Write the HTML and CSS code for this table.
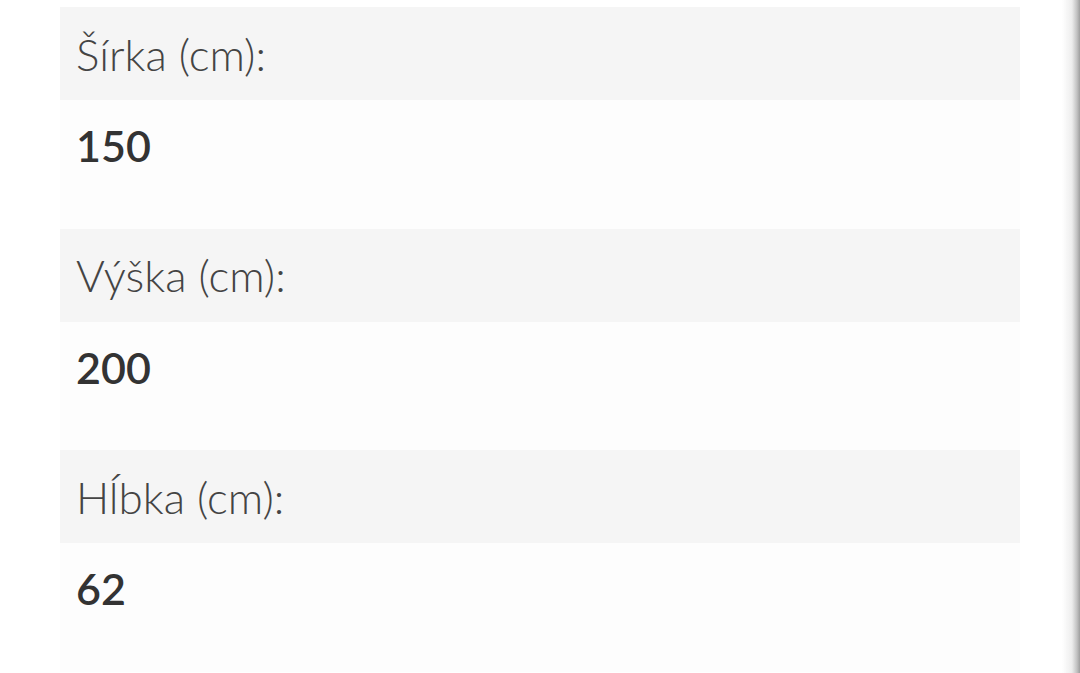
FILE: index.html
```html
<!DOCTYPE html>
<html lang="sk">
<head>
<meta charset="utf-8">
<link rel="stylesheet" href="styles.css">
</head>
<body>
<div class="page">
  <dl class="specs">
    <dt class="label">Šírka (cm):</dt>
    <dd class="value">150</dd>
    <dt class="label">Výška (cm):</dt>
    <dd class="value">200</dd>
    <dt class="label">Hĺbka (cm):</dt>
    <dd class="value">62</dd>
  </dl>
  <div class="edge"></div>
</div>
</body>
</html>
```
FILE: styles.css
```css
html, body {
  margin: 0;
  padding: 0;
  background: #ffffff;
  height: 100%;
  overflow: hidden;
}
.page {
  padding: 7px 60px 0 60px;
  font-family: Lato, "Open Sans", sans-serif;
}
.specs {
  margin: 0;
  display: flex;
  flex-direction: column;
}
.label {
  margin: 0;
  height: 93px;
  background: #f5f5f5;
  color: #444444;
  font-weight: 300;
  font-size: 44px;
  padding: 0 16px;
  display: flex;
  align-items: center;
  box-sizing: border-box;
}
.value {
  margin: 0;
  height: 128.5px;
  background: #fdfdfd;
  color: #333333;
  font-weight: 600;
  font-size: 43px;
  padding: 0 16px;
  padding-top: 22px;
  box-sizing: border-box;
  line-height: 48px;
}
.edge {
  position: fixed;
  top: 0;
  right: 0;
  width: 18px;
  height: 100%;
  background: linear-gradient(to right, rgba(255,255,255,0) 0%, rgba(225,225,225,0.6) 55%, #c4c4c4 82%, #9e9e9e 100%);
}
```
